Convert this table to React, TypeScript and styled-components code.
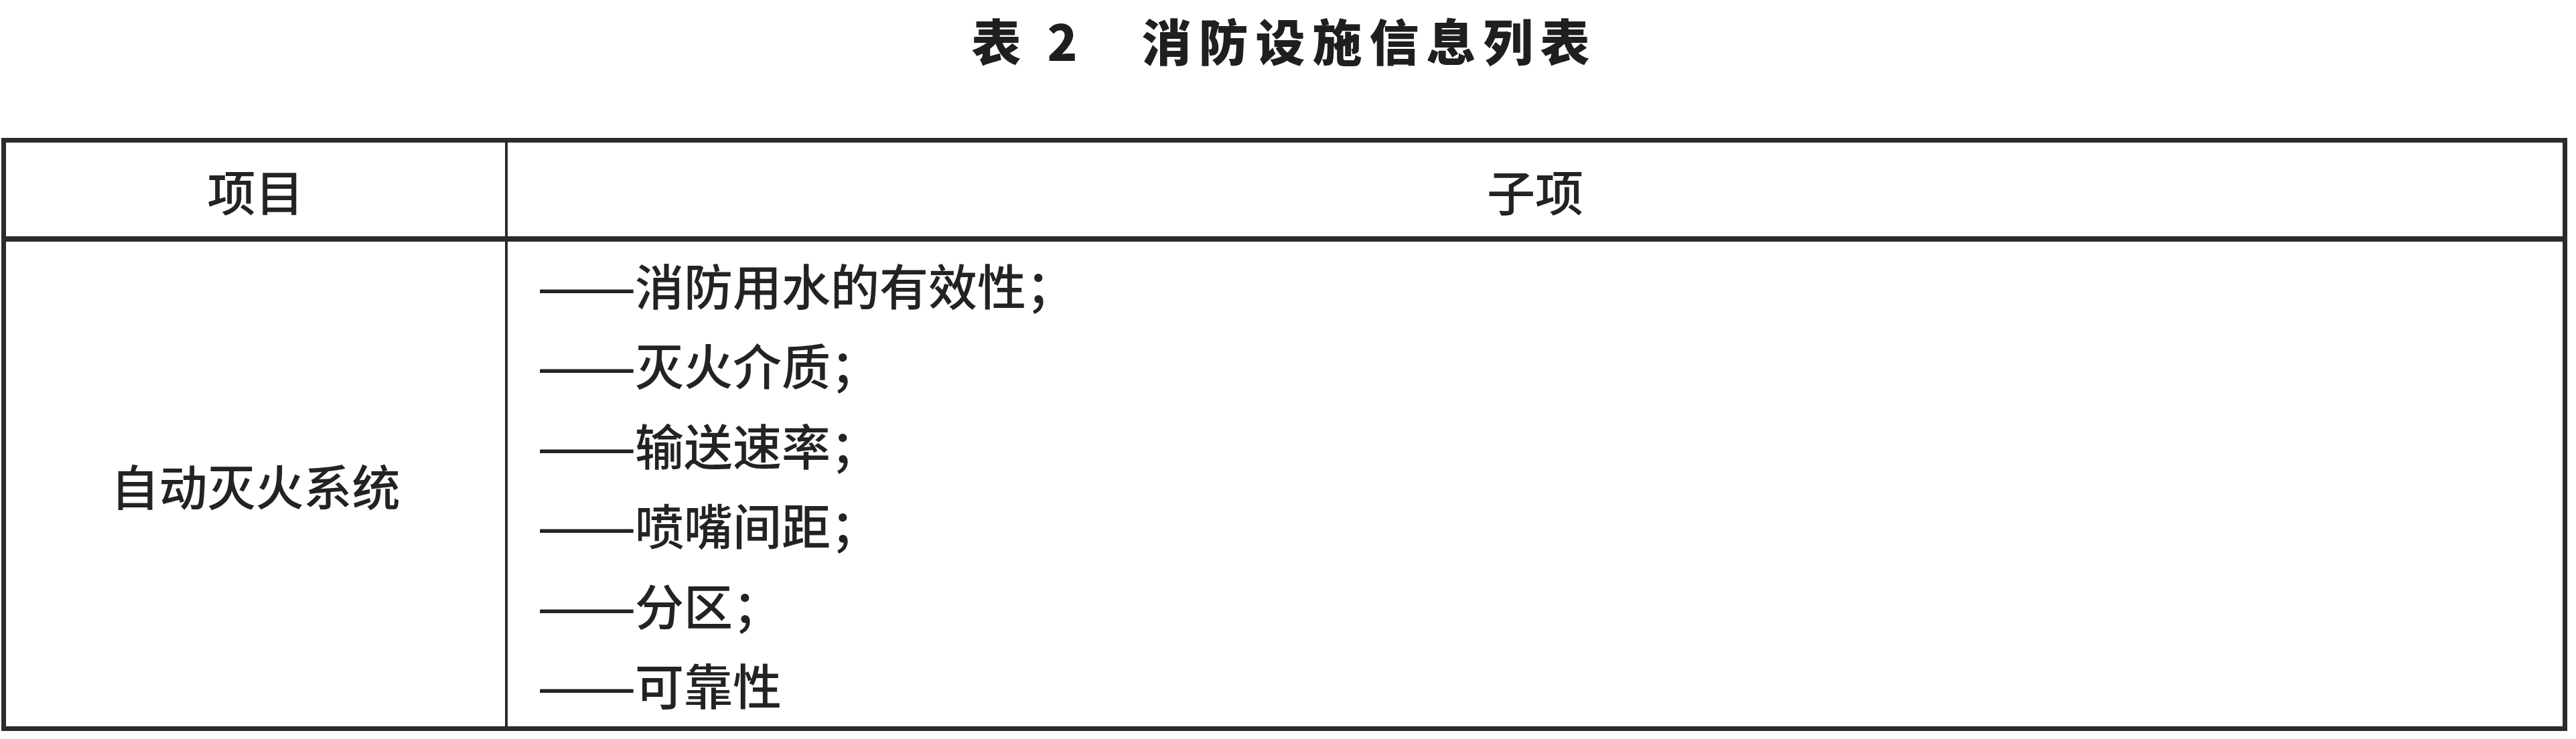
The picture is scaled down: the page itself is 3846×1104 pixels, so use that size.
import React from "react";
import styled, { createGlobalStyle } from "styled-components";

const GlobalStyle = createGlobalStyle`
  * {
    box-sizing: border-box;
  }
  html, body {
    margin: 0;
    padding: 0;
    background: #ffffff;
  }
  body {
    font-family: "Noto Sans CJK SC", "Noto Sans", sans-serif;
    color: #232323;
  }
`;

const Page = styled.div`
  width: 3831px;
  margin-left: 2px;
  padding-top: 20px;
`;

const Caption = styled.h1`
  margin: 0 0 108px;
  text-align: center;
  font-size: 74px;
  line-height: 78px;
  font-weight: 900;
  letter-spacing: 11px;
  color: #1f1f1f;
`;

const Table = styled.table`
  width: 100%;
  table-layout: fixed;
  border-collapse: separate;
  border-spacing: 0;
  border: 7px solid #2b2b2b;
`;

const HeadCell = styled.th<{ $first?: boolean }>`
  height: 148px;
  padding: 0;
  border-bottom: 8px solid #2b2b2b;
  border-right: ${(p) => (p.$first ? "4px solid #2b2b2b" : "none")};
  width: ${(p) => (p.$first ? "749px" : "auto")};
  font-size: 72px;
  font-weight: 500;
  text-align: center;
  vertical-align: middle;
`;

const NameCell = styled.td`
  height: 724px;
  padding: 0;
  border-right: 4px solid #2b2b2b;
  font-size: 72px;
  font-weight: 500;
  text-align: center;
  vertical-align: middle;
`;

const ItemCell = styled.td`
  padding: 0 0 0 44px;
  vertical-align: middle;
`;

const ItemList = styled.ul`
  margin: 0;
  padding: 0;
  list-style: none;
`;

const Item = styled.li`
  font-size: 73px;
  font-weight: 500;
  line-height: 119.5px;
  white-space: nowrap;
`;

/* the font's em dash is narrower than a full cell, so the pair is stretched to two ems */
const Dash = styled.span`
  display: inline-block;
  width: 146px;
  white-space: nowrap;
  letter-spacing: 0;
`;

const DashInk = styled.span`
  display: inline-block;
  transform: scaleX(1.2);
  transform-origin: left center;
`;

const items = [
  "消防用水的有效性；",
  "灭火介质；",
  "输送速率；",
  "喷嘴间距；",
  "分区；",
  "可靠性",
];

export default function App() {
  return (
    <>
      <GlobalStyle />
      <Page>
        <Caption>表 2　消防设施信息列表</Caption>
        <Table>
          <thead>
            <tr>
              <HeadCell $first>项目</HeadCell>
              <HeadCell>子项</HeadCell>
            </tr>
          </thead>
          <tbody>
            <tr>
              <NameCell>自动灭火系统</NameCell>
              <ItemCell>
                <ItemList>
                  {items.map((text) => (
                    <Item key={text}>
                      <Dash>
                        <DashInk>——</DashInk>
                      </Dash>
                      {text}
                    </Item>
                  ))}
                </ItemList>
              </ItemCell>
            </tr>
          </tbody>
        </Table>
      </Page>
    </>
  );
}
